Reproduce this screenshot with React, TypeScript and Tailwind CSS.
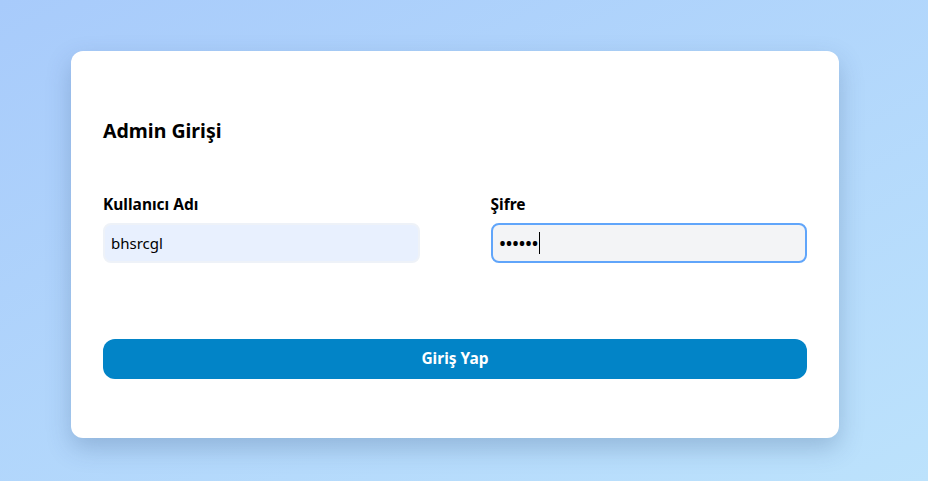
export default function App() {
  return (
    <div
      className="w-full h-screen flex items-center justify-center bg-gradient-to-br from-[#a8cbfb] to-[#bce2fc]"
      style={{ fontFamily: '"Noto Sans", "Open Sans", sans-serif' }}
    >
      <div className="w-[768px] bg-white rounded-xl shadow-[0_10px_25px_rgba(40,70,120,0.25)] px-8 pt-[66px] pb-[59px] mt-[8px] mr-[18px]">
        {/* Title */}
        <h2 className="text-[19.5px] font-bold text-black leading-7">Admin Girişi</h2>

        {/* Fields */}
        <div className="grid grid-cols-2 gap-x-[71px] mt-[49px]">
          <div>
            <label className="block text-[15.5px] font-bold text-black leading-5 mb-[9px]">Kullanıcı Adı</label>
            <input
              type="text"
              defaultValue="bhsrcgl"
              className="w-full h-10 rounded-lg border-2 border-[#eef2f8] bg-[#e8f0fe] px-[6px] text-[15px] text-black outline-none"
            />
          </div>
          <div>
            <label className="block text-[15.5px] font-bold text-black leading-5 mb-[9px]">Şifre</label>
            <div className="w-full h-10 rounded-lg border-2 border-[#60a5fa] bg-[#f3f4f6] px-[7px] flex items-center">
              <span className="text-[16px] font-bold text-black tracking-[0.5px] leading-none">••••••</span>
              <span className="w-px h-[22px] bg-black" />
            </div>
          </div>
        </div>

        {/* Submit */}
        <button className="mt-[76px] w-full h-10 rounded-xl bg-[#0284c7] text-white text-[15.5px] font-bold">
          Giriş Yap
        </button>
      </div>
    </div>
  )
}
